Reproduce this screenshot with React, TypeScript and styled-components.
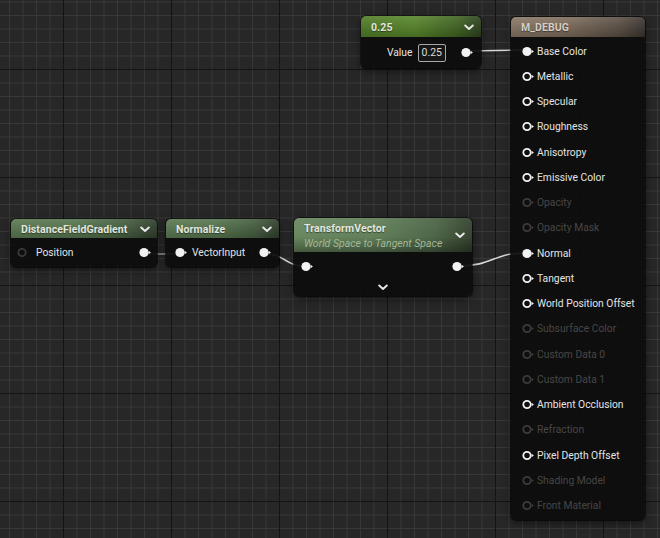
import React from 'react';
import styled, { createGlobalStyle } from 'styled-components';

const Global = createGlobalStyle`
  html, body { margin: 0; padding: 0; background: #272727; }
  body { font-family: Roboto, "Noto Sans", "Liberation Sans", sans-serif; }
  #root { width: 660px; height: 538px; }
`;

type Tone = 'lime' | 'sage' | 'moss' | 'tan';

const tones: Record<Tone, string> = {
  lime: 'linear-gradient(to bottom, rgba(255,255,255,0.10), rgba(0,0,0,0.18)), linear-gradient(to right, #4e7d24 0%, #568629 45%, #3f6420 80%, #2b401c 100%)',
  sage: 'linear-gradient(to bottom, rgba(255,255,255,0.08), rgba(0,0,0,0.2)), linear-gradient(to right, #5c7c53 0%, #587850 45%, #465f40 80%, #313f2d 100%)',
  moss: 'linear-gradient(to bottom, rgba(255,255,255,0.06) 0%, rgba(0,0,0,0) 55%, rgba(0,0,0,0.35) 100%), linear-gradient(to right, #69885f 0%, #62805a 45%, #4d6547 80%, #35432f 100%)',
  tan: 'linear-gradient(to bottom, rgba(255,255,255,0.10), rgba(0,0,0,0.2)), linear-gradient(to right, #8a7866 0%, #7c6b5b 45%, #5c5045 80%, #3a332e 100%)',
};

const Canvas = styled.div`
  position: relative;
  width: 660px;
  height: 538px;
  overflow: hidden;
  background-color: #272727;
  background-image:
    linear-gradient(to right, #141414 0 1.5px, transparent 1.5px),
    linear-gradient(to bottom, #141414 0 1.5px, transparent 1.5px),
    linear-gradient(to right, #383838 0 1px, transparent 1px),
    linear-gradient(to bottom, #383838 0 1px, transparent 1px);
  background-size: 108px 108px, 108px 108px, 13.5px 13.5px, 13.5px 13.5px;
  background-position: 63px 0, 0 69px, 9px 0, 0 1.5px;
`;

const Wires = styled.svg`
  position: absolute;
  left: 0;
  top: 0;
  pointer-events: none;
`;

const Node = styled.div<{ $x: number; $y: number; $w: number; $h: number }>`
  position: absolute;
  left: ${p => p.$x}px;
  top: ${p => p.$y}px;
  width: ${p => p.$w}px;
  height: ${p => p.$h}px;
  display: flex;
  flex-direction: column;
  background: rgba(13, 13, 13, 0.93);
  border-radius: 5px;
  overflow: hidden;
  box-shadow: 0 0 0 1px rgba(0, 0, 0, 0.55), 0 3px 8px rgba(0, 0, 0, 0.5);
`;

const Header = styled.div<{ $tone: Tone; $h: number }>`
  flex: none;
  height: ${p => p.$h}px;
  display: flex;
  align-items: center;
  justify-content: space-between;
  padding: 1px 7px 0 10px;
  box-sizing: border-box;
  background: ${p => tones[p.$tone]};
`;

const TitleBlock = styled.div`
  display: flex;
  flex-direction: column;
  gap: 2px;
`;

const Title = styled.span<{ $tan?: boolean }>`
  font-size: 10.5px;
  font-weight: 700;
  color: ${p => (p.$tan ? '#d6cdc4' : '#e2e6df')};
  letter-spacing: 0.1px;
  text-shadow: 0 1px 1px rgba(0, 0, 0, 0.45);
  white-space: nowrap;
`;

const Subtitle = styled.span`
  font-size: 10.5px;
  font-style: italic;
  color: #a3b898;
  white-space: nowrap;
`;

const Body = styled.div<{ $padT?: number }>`
  flex: 1;
  display: flex;
  flex-direction: column;
  padding-top: ${p => p.$padT ?? 0}px;
`;

const IORow = styled.div<{ $h: number; $padL: number; $padR: number }>`
  height: ${p => p.$h}px;
  display: flex;
  align-items: center;
  justify-content: space-between;
  padding: 0 ${p => p.$padR}px 0 ${p => p.$padL}px;
`;

const PinGroup = styled.div<{ $gap: number }>`
  display: flex;
  align-items: center;
  gap: ${p => p.$gap}px;
`;

const Label = styled.span<{ $dim?: boolean }>`
  font-size: 10.3px;
  color: ${p => (p.$dim ? '#474747' : '#e4e4e4')};
  white-space: nowrap;
`;

const ValueRow = styled.div`
  height: 31px;
  display: flex;
  align-items: center;
  justify-content: flex-end;
  padding-right: 8px;
`;

const ValueBox = styled.div`
  margin-left: 5px;
  margin-right: 15px;
  height: 16px;
  padding: 0 3px;
  display: flex;
  align-items: center;
  border: 1px solid #a8a8a8;
  border-radius: 2px;
  background: #161616;
  font-size: 10.5px;
  color: #dcdcdc;
`;

const FooterRow = styled.div`
  flex: 1;
  display: flex;
  align-items: center;
  justify-content: center;
  padding-bottom: 2px;
`;

type PinKind = 'filled' | 'hollow' | 'dim' | 'ghost';

const Pin: React.FC<{ kind: PinKind }> = ({ kind }) => {
  const color = kind === 'filled' || kind === 'hollow' ? '#f2f2f2' : kind === 'dim' ? '#3c3c3c' : '#3a3a3a';
  return (
    <svg width="12" height="11" viewBox="0 0 12 11" style={{ flex: 'none' }}>
      {kind === 'filled' ? (
        <circle cx="5" cy="5.5" r="4.6" fill={color} />
      ) : (
        <circle cx="5" cy="5.5" r="3.7" fill="none" stroke={color} strokeWidth="1.8" />
      )}
      {kind !== 'ghost' && <polygon points="9.6,3.8 11.9,5.5 9.6,7.2" fill={color} />}
    </svg>
  );
};

const Chevron: React.FC = () => (
  <svg width="10" height="7" viewBox="0 0 10 7" style={{ flex: 'none' }}>
    <polyline points="1.2,1.5 5,5 8.8,1.5" fill="none" stroke="#e8e8e8" strokeWidth="1.9" strokeLinecap="round" strokeLinejoin="round" />
  </svg>
);

const outputs: { name: string; on: boolean; filled?: boolean }[] = [
  { name: 'Base Color', on: true, filled: true },
  { name: 'Metallic', on: true },
  { name: 'Specular', on: true },
  { name: 'Roughness', on: true },
  { name: 'Anisotropy', on: true },
  { name: 'Emissive Color', on: true },
  { name: 'Opacity', on: false },
  { name: 'Opacity Mask', on: false },
  { name: 'Normal', on: true, filled: true },
  { name: 'Tangent', on: true },
  { name: 'World Position Offset', on: true },
  { name: 'Subsurface Color', on: false },
  { name: 'Custom Data 0', on: false },
  { name: 'Custom Data 1', on: false },
  { name: 'Ambient Occlusion', on: true },
  { name: 'Refraction', on: false },
  { name: 'Pixel Depth Offset', on: true },
  { name: 'Shading Model', on: false },
  { name: 'Front Material', on: false },
];

export default function App() {
  return (
    <>
      <Global />
      <Canvas>
        <Wires width={660} height={538} viewBox="0 0 660 538">
          <path d="M 468 51 L 524 50" stroke="#d8d8d8" strokeWidth="1.6" fill="none" />
          <path d="M 146 254 L 178 254" stroke="#9a9a9a" strokeWidth="1.5" fill="none" />
          <path d="M 266 254 C 284 254, 286 266, 304 266" stroke="#cfcfcf" strokeWidth="1.6" fill="none" />
          <path d="M 459 266 C 492 266, 494 253, 524 253" stroke="#d8d8d8" strokeWidth="1.6" fill="none" />
        </Wires>

        <Node $x={361} $y={16} $w={120} $h={52}>
          <Header $tone="lime" $h={21}>
            <Title>0.25</Title>
            <Chevron />
          </Header>
          <ValueRow>
            <Label>Value</Label>
            <ValueBox>0.25</ValueBox>
            <Pin kind="filled" />
          </ValueRow>
        </Node>

        <Node $x={11} $y={219} $w={146} $h={48}>
          <Header $tone="sage" $h={19}>
            <Title>DistanceFieldGradient</Title>
            <Chevron />
          </Header>
          <Body>
            <IORow $h={29} $padL={6} $padR={6}>
              <PinGroup $gap={7}>
                <Pin kind="ghost" />
                <Label>Position</Label>
              </PinGroup>
              <Pin kind="filled" />
            </IORow>
          </Body>
        </Node>

        <Node $x={166} $y={219} $w={113} $h={48}>
          <Header $tone="sage" $h={19}>
            <Title>Normalize</Title>
            <Chevron />
          </Header>
          <Body>
            <IORow $h={29} $padL={9} $padR={8}>
              <PinGroup $gap={5}>
                <Pin kind="filled" />
                <Label>VectorInput</Label>
              </PinGroup>
              <Pin kind="filled" />
            </IORow>
          </Body>
        </Node>

        <Node $x={294} $y={218} $w={178} $h={78}>
          <Header $tone="moss" $h={34}>
            <TitleBlock>
              <Title>TransformVector</Title>
              <Subtitle>World Space to Tangent Space</Subtitle>
            </TitleBlock>
            <Chevron />
          </Header>
          <Body>
            <IORow $h={28} $padL={7} $padR={8}>
              <Pin kind="filled" />
              <Pin kind="filled" />
            </IORow>
            <FooterRow>
              <Chevron />
            </FooterRow>
          </Body>
        </Node>

        <Node $x={511} $y={17} $w={134} $h={503}>
          <Header $tone="tan" $h={20}>
            <Title $tan>M_DEBUG</Title>
          </Header>
          <Body $padT={1.5}>
            {outputs.map(o => (
              <IORow key={o.name} $h={25.25} $padL={11} $padR={4}>
                <PinGroup $gap={3}>
                  <Pin kind={o.filled ? 'filled' : o.on ? 'hollow' : 'dim'} />
                  <Label $dim={!o.on}>{o.name}</Label>
                </PinGroup>
              </IORow>
            ))}
          </Body>
        </Node>
      </Canvas>
    </>
  );
}
